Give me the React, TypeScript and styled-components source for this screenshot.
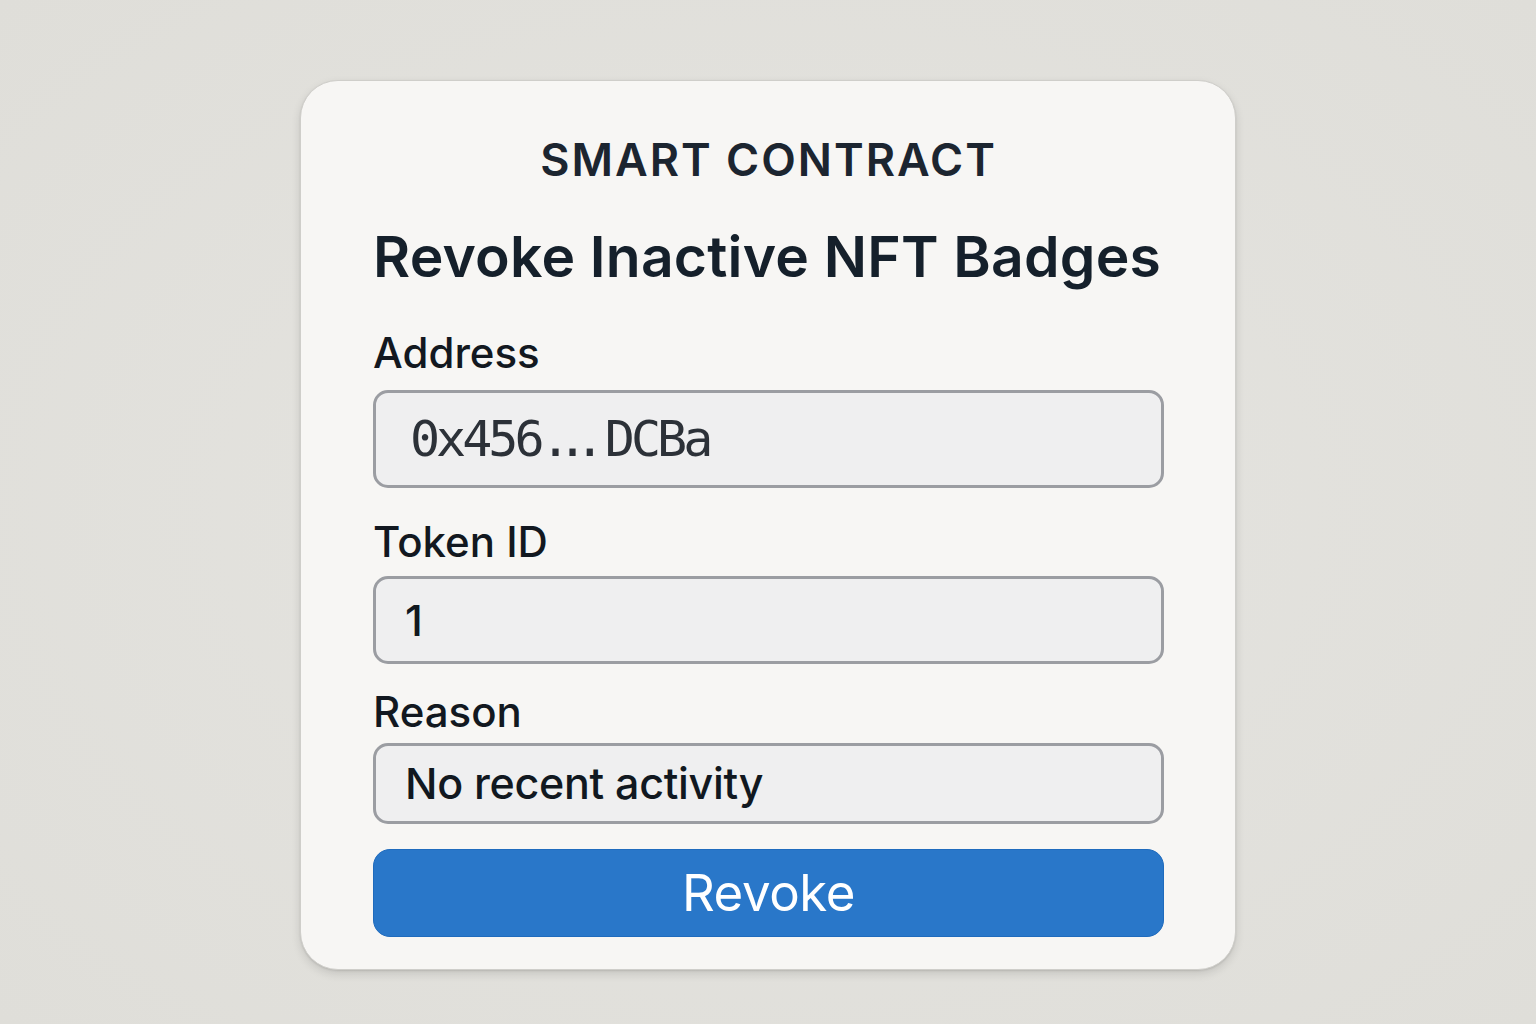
import React from "react";
import styled, { createGlobalStyle } from "styled-components";

const GlobalStyle = createGlobalStyle`
  html, body {
    margin: 0;
    padding: 0;
    background: #e1e0dc;
  }
  body {
    font-family: Inter, "Noto Sans", "Liberation Sans", sans-serif;
    -webkit-font-smoothing: antialiased;
  }
  * { box-sizing: border-box; }
`;

const Page = styled.div`
  width: 1536px;
  height: 1024px;
  display: flex;
  justify-content: center;
  align-items: flex-start;
  padding-top: 80px;
  background: radial-gradient(ellipse at 50% 50%, #e5e4e0 0%, #dfded9 100%);
`;

const Card = styled.div`
  width: 936px;
  height: 890px;
  background: #f7f6f4;
  border: 1px solid #cfceca;
  border-radius: 38px;
  box-shadow: 0 4px 10px rgba(0, 0, 0, 0.12), 0 1px 2px rgba(0, 0, 0, 0.1);
  padding: 56px 71px 0 72px;
  display: flex;
  flex-direction: column;
`;

const Eyebrow = styled.div`
  font-size: 45px;
  line-height: 1;
  font-weight: 600;
  letter-spacing: 2px;
  color: #1c2530;
  text-align: center;
  text-transform: uppercase;
`;

const Title = styled.h1`
  margin: 46px 0 0;
  font-size: 57px;
  line-height: 1;
  font-weight: 600;
  letter-spacing: 0.2px;
  color: #15202b;
`;

const Label = styled.label<{ $gap: number }>`
  display: block;
  margin-top: ${(p) => p.$gap}px;
  font-size: 42px;
  line-height: 1;
  font-weight: 500;
  color: #121820;
`;

const Field = styled.div<{ $h: number; $mono?: boolean; $top: number }>`
  margin-top: ${(p) => p.$top}px;
  height: ${(p) => p.$h}px;
  border: 3px solid #9b9da2;
  border-radius: 15px;
  background: #efeff0;
  display: flex;
  align-items: center;
  padding-left: ${(p) => (p.$mono ? 34 : 29)}px;
  font-family: ${(p) =>
    p.$mono
      ? `"DejaVu Sans Mono", "Liberation Mono", monospace`
      : `Inter, "Noto Sans", "Liberation Sans", sans-serif`};
  font-size: ${(p) => (p.$mono ? 50 : 43)}px;
  letter-spacing: ${(p) => (p.$mono ? -4 : -0.3)}px;
  font-weight: ${(p) => (p.$mono ? 400 : 500)};
  line-height: 1;
  color: ${(p) => (p.$mono ? "#2c3138" : "#111820")};
`;

const Dots = styled.span`
  letter-spacing: -13px;
  margin-right: 13px;
`;

const Button = styled.button`
  margin-top: 25px;
  height: 88px;
  width: 100%;
  border: 1px solid #1f6bbd;
  border-radius: 17px;
  background: #2977c9;
  color: #ffffff;
  font-family: Inter, "Noto Sans", "Liberation Sans", sans-serif;
  font-size: 51px;
  font-weight: 400;
  letter-spacing: -0.4px;
  line-height: 1;
  display: flex;
  align-items: center;
  justify-content: center;
  padding: 0 0 2px;
  cursor: pointer;
`;

export default function App() {
  return (
    <>
      <GlobalStyle />
      <Page>
        <Card>
          <Eyebrow>Smart Contract</Eyebrow>
          <Title>Revoke Inactive NFT Badges</Title>
          <Label $gap={47}>Address</Label>
          <Field $h={98} $mono $top={16}>
            0x456<Dots>...</Dots>DCBa
          </Field>
          <Label $gap={33}>Token ID</Label>
          <Field $h={88} $top={13}>
            1
          </Field>
          <Label $gap={27}>Reason</Label>
          <Field $h={81} $top={10}>
            No recent activity
          </Field>
          <Button>Revoke</Button>
        </Card>
      </Page>
    </>
  );
}
